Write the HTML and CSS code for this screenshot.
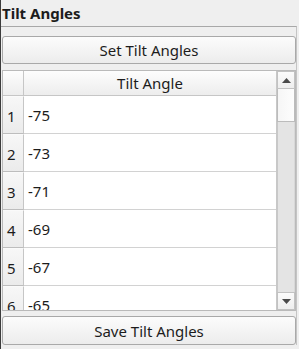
FILE: index.html
```html
<!DOCTYPE html>
<html>
<head>
<meta charset="utf-8">
<link rel="stylesheet" href="styles.css">
</head>
<body>
<div class="panel">
  <div class="title">Tilt Angles</div>
  <div class="frame">
    <button class="btn">Set Tilt Angles</button>
    <div class="table">
      <div class="grid">
        <div class="head-row"><div class="corner"></div><div class="col-head">Tilt Angle</div></div>
        <div class="body">
          <div class="row"><div class="rh">1</div><div class="cell">-75</div></div>
          <div class="row"><div class="rh">2</div><div class="cell">-73</div></div>
          <div class="row"><div class="rh">3</div><div class="cell">-71</div></div>
          <div class="row"><div class="rh">4</div><div class="cell">-69</div></div>
          <div class="row"><div class="rh">5</div><div class="cell">-67</div></div>
          <div class="row"><div class="rh">6</div><div class="cell">-65</div></div>
        </div>
      </div>
      <div class="scrollbar">
        <div class="sb-btn"><svg width="9" height="5" viewBox="0 0 9 5"><polygon points="0,5 9,5 4.5,0" fill="#4a4a4a"/></svg></div>
        <div class="sb-handle"></div>
        <div class="sb-trough"></div>
        <div class="sb-btn"><svg width="9" height="5" viewBox="0 0 9 5"><polygon points="0,0 9,0 4.5,5" fill="#4a4a4a"/></svg></div>
      </div>
    </div>
    <button class="btn save">Save Tilt Angles</button>
  </div>
</div>
</body>
</html>
```

FILE: styles.css
```css
html, body {
  margin: 0;
  padding: 0;
}
body {
  background: #efefef;
  font-family: "Noto Sans", "Open Sans", sans-serif;
  font-size: 15px;
  color: #1c1c1c;
  width: 299px;
  height: 349px;
  overflow: hidden;
}
.panel {
  border-left: 1px solid #3c3c3c;
  height: 349px;
  box-sizing: border-box;
}
.title {
  height: 26px;
  line-height: 26px;
  font-weight: bold;
  padding-left: 1px;
}
.frame {
  width: 296px;
  box-sizing: border-box;
  border-top: 1px solid #a8a8a8;
  border-right: 1px solid #c4c4c4;
  padding: 9px 0 0 1px;
  display: flex;
  flex-direction: column;
}
.btn {
  display: block;
  width: 294px;
  height: 28px;
  margin: 0;
  padding: 0;
  border: 1px solid #a9a9a9;
  border-radius: 3px;
  background: linear-gradient(#fcfcfc, #ececec);
  font-family: inherit;
  font-size: 15px;
  line-height: 26px;
  color: #1c1c1c;
  text-align: center;
}
.btn.save {
  margin-top: 5px;
  height: 29px;
}
.table {
  margin-top: 6px;
  height: 241px;
  box-sizing: border-box;
  border: 1px solid #bababa;
  background: #ffffff;
  display: flex;
}
.grid {
  flex: 1;
  display: flex;
  flex-direction: column;
  min-width: 0;
}
.head-row {
  height: 25px;
  box-sizing: border-box;
  display: flex;
  border-bottom: 1px solid #c6c6c6;
  background: linear-gradient(#fdfdfd, #ededed);
}
.corner {
  width: 21px;
  box-sizing: border-box;
  border-right: 1px solid #c6c6c6;
}
.col-head {
  flex: 1;
  text-align: center;
  line-height: 24px;
}
.body {
  flex: 1;
  overflow: hidden;
}
.row {
  height: 38px;
  box-sizing: border-box;
  display: flex;
  border-bottom: 1px solid #d2d2d2;
}
.rh {
  width: 21px;
  height: 38px;
  box-sizing: border-box;
  border-right: 1px solid #c6c6c6;
  border-top: 1px solid #fafafa;
  border-bottom: 1px solid #bdbdbd;
  margin-bottom: -1px;
  background: linear-gradient(#f7f7f7, #ebebeb);
  padding: 2px 0 0 4px;
  line-height: 34px;
}
.cell {
  flex: 1;
  padding: 2px 0 0 4px;
  line-height: 35px;
}
.scrollbar {
  width: 18px;
  display: flex;
  flex-direction: column;
  background: #e4e4e4;
  border-left: 1px solid #c8c8c8;
}
.sb-btn {
  height: 18px;
  box-sizing: border-box;
  border: 1px solid #c2c2c2;
  background: linear-gradient(#fbfbfb, #eeeeee);
  display: flex;
  align-items: center;
  justify-content: center;
}
.sb-handle {
  height: 33px;
  box-sizing: border-box;
  border: 1px solid #bcbcbc;
  border-top: none;
  background: linear-gradient(90deg, #f6f6f6, #fdfdfd);
}
.sb-trough {
  flex: 1;
  border-left: 1px solid #c8c8c8;
  border-right: 1px solid #d8d8d8;
}
```
